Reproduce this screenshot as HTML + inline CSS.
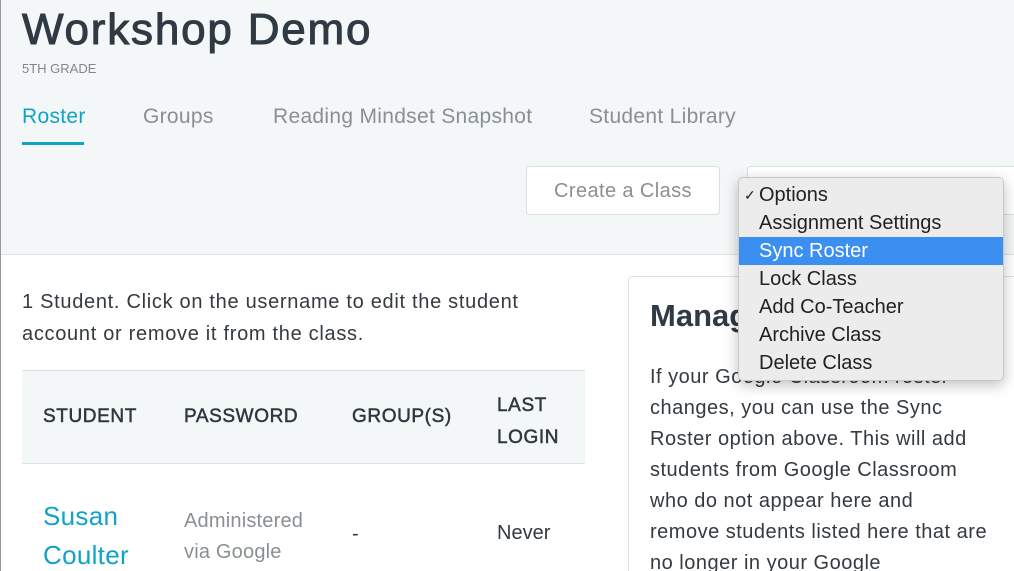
<!DOCTYPE html>
<html><head><style>
*{margin:0;padding:0;box-sizing:border-box}
html,body{width:1014px;height:571px;overflow:hidden}
body{position:relative;font-family:"Liberation Sans",sans-serif;background:#fff}
.a{position:absolute;white-space:nowrap}
#hdr{position:absolute;left:0;top:0;width:1014px;height:255px;background:#f4f7f7;border-bottom:1px solid #dde2e2}
.tab{font-size:21px;letter-spacing:0.3px;color:#8a8f93;top:105px}
.th{font-size:19px;color:#2f3840;letter-spacing:0.6px;-webkit-text-stroke:0.5px #2f3840}
.dd{position:absolute;left:738px;top:177px;width:266px;height:204px;background:#ececec;border:1px solid #c8c8c8;border-radius:5px;box-shadow:0 4px 14px rgba(0,0,0,.25)}
.it{position:absolute;left:0;width:264px;height:28px;line-height:28px;padding-left:20px;font-size:20px;color:#222}
.p{font-size:20px;letter-spacing:0.5px;color:#333a40;left:650px}
</style></head><body>
<div id="hdr"></div>
<div class="a" style="left:0;top:0;width:1px;height:571px;background:#999"></div>
<div class="a" style="left:22px;top:5px;font-size:44px;letter-spacing:1.8px;color:#2f3a44;-webkit-text-stroke:1px #2f3a44">Workshop Demo</div>
<div class="a" style="left:22px;top:61px;font-size:13px;color:#80868b">5TH GRADE</div>
<div class="a tab" style="left:22px;color:#10a3c8">Roster</div>
<div class="a" style="left:22px;top:142px;width:62px;height:3px;background:#10a3c8"></div>
<div class="a tab" style="left:143px">Groups</div>
<div class="a tab" style="left:273px">Reading Mindset Snapshot</div>
<div class="a tab" style="left:589px">Student Library</div>
<div class="a" style="left:526px;top:166px;width:194px;height:49px;background:#fff;border:1px solid #dcdfe0;border-radius:4px;font-size:20px;letter-spacing:0.4px;color:#8a8f93;text-align:center;line-height:49px">Create a Class</div>
<div class="a" style="left:747px;top:166px;width:280px;height:49px;background:#fff;border:1px solid #dcdfe0;border-radius:4px"></div>

<div class="a" style="left:22px;top:286px;font-size:20px;letter-spacing:0.7px;color:#333a40;line-height:32px">1 Student. Click on the username to edit the student<br>account or remove it from the class.</div>
<div class="a" style="left:22px;top:370px;width:563px;height:94px;background:#f4f7f7;border-top:1px solid #dde2e2;border-bottom:1px solid #dde2e2"></div>
<div class="a th" style="left:43px;top:406px">STUDENT</div>
<div class="a th" style="left:184px;top:406px">PASSWORD</div>
<div class="a th" style="left:352px;top:406px">GROUP(S)</div>
<div class="a th" style="left:497px;top:390px;line-height:32px">LAST<br>LOGIN</div>
<div class="a" style="left:43px;top:497px;font-size:26px;letter-spacing:0.3px;color:#10a3c8;line-height:39px">Susan<br>Coulter</div>
<div class="a" style="left:184px;top:506px;font-size:20px;letter-spacing:0.2px;color:#8a8f93;line-height:31px">Administered<br>via Google</div>
<div class="a" style="left:352px;top:523px;font-size:20px;color:#333a40">-</div>
<div class="a" style="left:497px;top:522px;font-size:20px;color:#333a40">Never</div>

<div class="a" style="left:628px;top:276px;width:400px;height:320px;border:1px solid #dcdfe0;border-radius:4px;background:#fff"></div>
<div class="a" style="left:650px;top:298px;font-size:31px;font-weight:bold;color:#2f3a44">Manage Roster</div>
<div class="a p" style="top:362px;line-height:31px">If your Google Classroom roster<br>changes, you can use the Sync<br>Roster option above. This will add<br>students from Google Classroom<br>who do not appear here and<br>remove students listed here that are<br>no longer in your Google</div>

<div class="dd">
<div class="it" style="top:3px"><span style="position:absolute;left:5px;font-size:14px">✓</span>Options</div>
<div class="it" style="top:31px">Assignment Settings</div>
<div class="it" style="top:59px;background:#3b8ff0;color:#fff">Sync Roster</div>
<div class="it" style="top:87px">Lock Class</div>
<div class="it" style="top:115px">Add Co-Teacher</div>
<div class="it" style="top:143px">Archive Class</div>
<div class="it" style="top:171px">Delete Class</div>
</div>
</body></html>
